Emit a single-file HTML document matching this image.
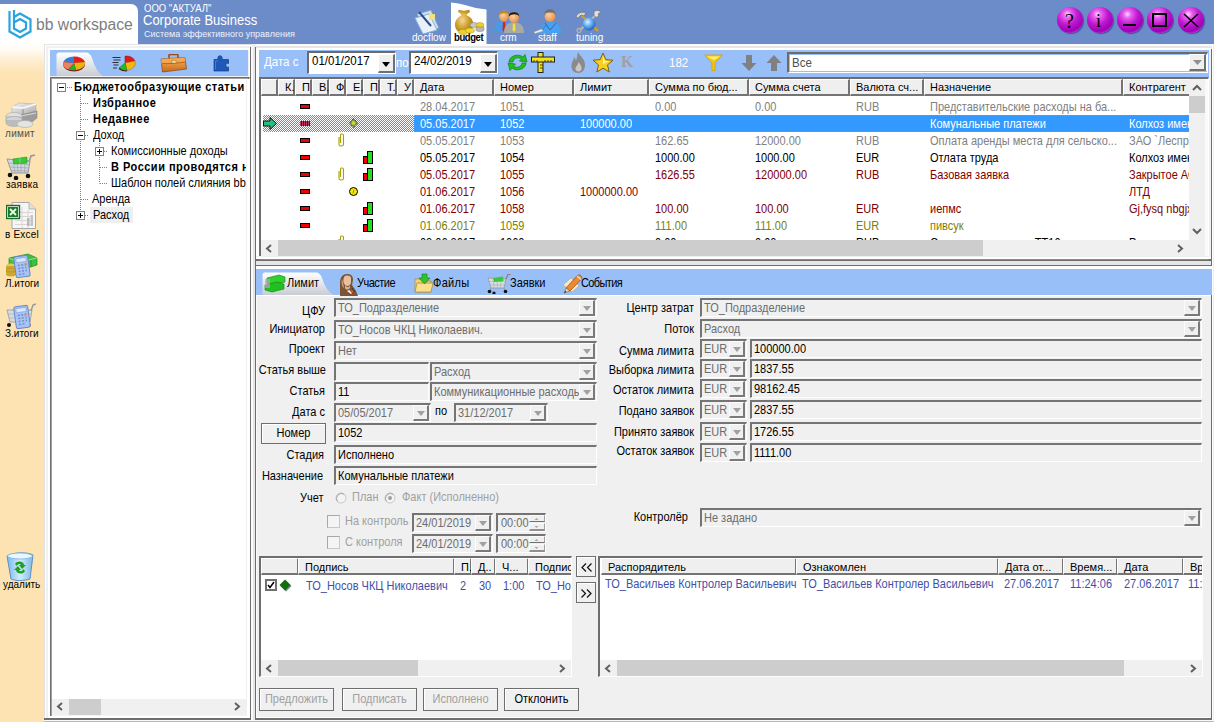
<!DOCTYPE html>
<html><head><meta charset="utf-8">
<style>
*{margin:0;padding:0;box-sizing:border-box}
html,body{width:1214px;height:722px;overflow:hidden;background:#f0f0f0;font-family:"Liberation Sans",sans-serif;font-size:11px;color:#000;position:relative}
.a{position:absolute}
.t{position:absolute;white-space:nowrap;line-height:13px;transform:scaleY(1.1);transform-origin:0 78%}
.r{text-align:right}
.hdr{left:0;top:0;width:1214px;height:44px;background:#6b8cc8}
.wb{top:7px;width:26px;height:26px;border-radius:50%;background:radial-gradient(circle at 40% 28%,#ffd8ff 0,#e860f0 16%,#c018d0 42%,#a000b8 70%,#d040e8 88%,#f080ff 100%);box-shadow:1px 1px 1px rgba(40,40,120,.6)}
.wb span{position:absolute;font-family:"Liberation Serif",serif;color:#000;line-height:20px}
.wb i{position:absolute;background:#000}
.tbox{width:9px;height:9px;border:1px solid #808080;background:#fff}
.tbox .h{position:absolute;left:1px;top:3px;width:5px;height:1px;background:#000}
.tbox .v{position:absolute;left:3px;top:1px;width:1px;height:5px;background:#000}
.tr{line-height:16px}
.fld{position:absolute;background:#f0f0f0;border-style:solid;border-width:2px 1px 1px 2px;border-color:#747474 #fff #fff #747474}
.dd{position:absolute;width:16px;background:#f0f0f0;border-style:solid;border-width:1px 2px 2px 1px;border-color:#fcfcfc #7a7a7a #7a7a7a #fcfcfc}
.dd:after{content:"";position:absolute;left:3px;top:5px;border-style:solid;border-width:5px 4.5px 0 4.5px;border-color:#a0a0a0 transparent transparent transparent}
.gh{position:absolute;top:0;height:17px;background:#efefef;border-style:solid;border-width:1px 2px 2px 1px;border-color:#fff #747474 #747474 #fff}
.ght{position:absolute;top:1px;white-space:nowrap;line-height:13px}
.datebox{position:absolute;top:51px;height:23px;background:#fff;border-style:solid;border-width:2px 1px 1px 2px;border-color:#6e6a68 #fff #fff #6e6a68;font-size:11.5px}
.datebox .t{line-height:16px;top:-1px}
.ddb{position:absolute;top:1px;width:17px;height:19px;background:#efefef;border-style:solid;border-width:1px 2px 2px 1px;border-color:#fff #707070 #707070 #fff}
.ddb:after{content:"";position:absolute;left:3px;top:7px;border-style:solid;border-width:5px 4.5px 0 4.5px;border-color:#000 transparent transparent transparent}
.dith{background:repeating-conic-gradient(#3399ff 0 25%,#fff 0 50%);background-size:2px 2px}
.pbtn{background:#f0f0f0;border:1px solid #6e6e6e;box-shadow:inset 1px 1px 0 #fff}
</style></head><body>
<!-- ===== HEADER ===== -->
<div class="a hdr"></div>
<div class="a" style="left:0;top:4px;width:138px;height:40px;background:#fff;border-top-right-radius:7px"></div>
<!-- sidebar -->
<div class="a" style="left:0;top:44px;width:44px;height:678px;background:linear-gradient(#fffefb 0,#fffaf2 6px,#feeccc 18px,#fde3b2 30px,#fde3b1 100%)"></div>
<!-- logo -->
<svg class="a" style="left:7px;top:8px" width="26" height="32" viewBox="0 0 26 32">
<g fill="none" stroke="#2aa4de" stroke-width="2.2">
<path d="M2.5 3 V23.5 L13 29.5 L23.5 23.5 V11.5 L13 5.5 L7 9"/>
<path d="M7 2 V20.5 L13 24 L19 20.5 V14.5 L13 11 L7 14.5"/>
</g></svg>
<div class="t" style="left:36px;top:16px;font-size:15.7px;line-height:18px;color:#7d7d7d">bb workspace</div>
<div class="t" style="left:144px;top:3px;font-size:9.5px;line-height:11px;color:#fff">ООО "АКТУАЛ"</div>
<div class="t" style="left:143px;top:12px;font-size:13px;line-height:16px;color:#fff;transform:scaleY(1.12);transform-origin:0 0">Corporate Business</div>
<div class="t" style="left:144px;top:29px;font-size:9px;line-height:11px;color:#eef2fb">Система эффективного управления</div>
<!-- modules -->
<svg class="a" style="left:451px;top:2px" width="36" height="42" viewBox="0 0 36 42"><path d="M0 42 V0.5 Q8 1 14 3 Q24 6.5 35.5 7.5 V42 Z" fill="#fff"/></svg>
<svg class="a" style="left:413px;top:8px" width="30" height="26" viewBox="0 0 30 26">
<path d="M4 6 L18 2 L26 20 L12 24 Z" fill="#c9def2" stroke="#7aa0c8" stroke-width="1"/>
<path d="M2 10 L16 6 L24 22 L10 26 Z" fill="#e8f1fa" stroke="#8fb0d6" stroke-width="1"/>
<rect x="16" y="6" width="6" height="6" fill="#f3e27a"/>
<path d="M6 4 L18 18" stroke="#2b4f86" stroke-width="2"/>
</svg>
<div class="t" style="left:412px;top:32px;font-size:10px;line-height:11px;color:#fff">docflow</div>
<svg class="a" style="left:453px;top:8px" width="32" height="27" viewBox="0 0 32 27">
<defs><radialGradient id="bagg" cx="0.4" cy="0.45" r="0.65"><stop offset="0" stop-color="#f8d890"/><stop offset="0.6" stop-color="#c89a28"/><stop offset="1" stop-color="#a07810"/></radialGradient></defs>
<path d="M6 1.5 C8 3 14 3 16 1.5 L17 4 C15 5 14 6 13 7 C19 9 21 14 20 18 C19 23 15 25 11 25 C6 25 2 22 2 17 C2 12 5 9 9 7 C8 6 7 5 5 4 Z" fill="url(#bagg)"/>
<path d="M8 6.5 H14" stroke="#e8c040" stroke-width="1.2"/>
<ellipse cx="10" cy="24" rx="4.5" ry="2.5" fill="#f0d020" stroke="#b09010" stroke-width="0.5"/>
<ellipse cx="17" cy="22.5" rx="4.5" ry="2.5" fill="#f0d830" stroke="#b09010" stroke-width="0.5"/>
<ellipse cx="21" cy="17" rx="4" ry="2.5" fill="#c8c8c8" stroke="#808080" stroke-width="0.5"/>
<ellipse cx="27" cy="17" rx="4" ry="2.5" fill="#f0d020" stroke="#b09010" stroke-width="0.5"/>
<path d="M23 19 H31 V22 C31 24 23 24 23 22 Z" fill="#b8b8b8" stroke="#808080" stroke-width="0.5"/>
</svg>
<div class="t" style="left:454px;top:32px;font-size:10px;line-height:11px;color:#000;letter-spacing:-0.4px;font-weight:bold;font-size:9.5px">budget</div>
<svg class="a" style="left:493px;top:9px" width="32" height="25" viewBox="0 0 32 25">
<defs><radialGradient id="face" cx="0.4" cy="0.4" r="0.7"><stop offset="0" stop-color="#fdd0a0"/><stop offset="1" stop-color="#e08840"/></radialGradient></defs>
<path d="M1 23 C1 15 5 12 11 12 C17 12 20 15 20 23 Z" fill="#4a98e8"/>
<path d="M10 13 L12 13 L12.5 21 L11 23 L9.5 21 Z" fill="#d82020"/>
<ellipse cx="11" cy="7" rx="5" ry="5.5" fill="url(#face)"/>
<path d="M5.8 6 C5.5 1 16 0 16.3 6 C15 3.5 8 3.5 5.8 6 Z" fill="#c08818"/>
<path d="M11 24 C11 16 15 13.5 21 13.5 C27 13.5 31 16 31 24 Z" fill="#a8a8a8"/>
<path d="M20 14.5 L22 14.5 L22.5 21 L21 23 L19.5 21 Z" fill="#f0e040"/>
<ellipse cx="21" cy="8.5" rx="5" ry="5.5" fill="url(#face)"/>
<path d="M15.8 7.5 C15 2 26.5 1.5 26.3 7.5 C25 4.5 18 4.5 15.8 7.5 Z" fill="#181818"/>
</svg>
<div class="t" style="left:500px;top:32px;font-size:10px;line-height:11px;color:#fff">crm</div>
<svg class="a" style="left:533px;top:8px" width="29" height="26" viewBox="0 0 29 26">
<path d="M7 26 C7 17 11 14 18 14 C25 14 28 18 28 26 Z" fill="#48a0f0"/>
<path d="M12 15 L17 22 L23 15" fill="none" stroke="#2a60a8" stroke-width="0.8"/>
<ellipse cx="17" cy="8" rx="5.5" ry="6" fill="url(#face)"/>
<path d="M11.3 8 C10.5 -1 23.5 -1 22.7 8 C22 5 21 4.5 17 4.5 C13 4.5 12 5 11.3 8 Z" fill="#707070"/>
<path d="M1 24 L9 21 L10 23 L2 25.5 Z" fill="#f0f0f0" stroke="#b0b0b0" stroke-width="0.5"/>
<path d="M9 22 L14 16" stroke="#3a70b0" stroke-width="0.8"/>
</svg>
<div class="t" style="left:538px;top:32px;font-size:10px;line-height:11px;color:#fff">staff</div>
<svg class="a" style="left:575px;top:10px" width="27" height="23" viewBox="0 0 27 23">
<defs><radialGradient id="glob" cx="0.4" cy="0.35" r="0.7"><stop offset="0" stop-color="#d8f0ff"/><stop offset="0.5" stop-color="#60a8f0"/><stop offset="1" stop-color="#1858b8"/></radialGradient></defs>
<path d="M6 5 L23 21" stroke="#d8a020" stroke-width="2.2"/>
<path d="M22 4 L5 20" stroke="#b8b8b8" stroke-width="2.2"/>
<circle cx="14" cy="14" r="6.5" fill="url(#glob)"/>
<path d="M1 7 C2 3 7 1 11 3 L9 6 L6 5 L3 8 Z" fill="#d8d8d8" stroke="#707070" stroke-width="0.7"/>
<path d="M19 2 C20 0 24 0 26 2 L23 4 L24 6 C22 8 19 7 19 5 Z" fill="#e0e0e0" stroke="#707070" stroke-width="0.7"/>
<circle cx="4" cy="20.5" r="2" fill="none" stroke="#b0b0b0" stroke-width="1.3"/>
</svg>
<div class="t" style="left:576px;top:32px;font-size:10px;line-height:11px;color:#fff">tuning</div>
<!-- window buttons -->
<div class="a wb" style="left:1057px"><span style="left:8px;top:4px;font-size:20px">?</span></div>
<div class="a wb" style="left:1087px"><span style="left:9px;top:4px;font-size:18px">i</span></div>
<div class="a wb" style="left:1117px"><i style="left:6px;top:17px;width:13px;height:2px"></i></div>
<div class="a wb" style="left:1147px"><i style="left:5px;top:6px;width:15px;height:14px;background:none;border:2px solid #000"></i></div>
<div class="a wb" style="left:1178px"><svg class="a" style="left:5px;top:6px" width="16" height="15"><path d="M1 1 L15 14 M15 1 L1 14" stroke="#000" stroke-width="1.6"/></svg></div>
<!-- ===== RIGHT TOP PANEL ===== -->
<div class="a" style="left:255px;top:44px;width:959px;height:678px;background:#f0f0f0"></div>

<div class="a" style="left:256px;top:44px;width:958px;height:2px;background:#fbfbfb"></div>
<div class="a" style="left:256px;top:46px;width:958px;height:2px;background:#e6e6e6"></div>
<div class="a" style="left:256px;top:48px;width:955px;height:2px;background:#fff"></div>
<div class="a" style="left:256px;top:48px;width:3px;height:212px;background:#fff"></div>
<div class="a" style="left:1211px;top:49px;width:1px;height:673px;background:#6e6e6e"></div>
<div class="a" style="left:1212px;top:44px;width:1px;height:678px;background:#fff"></div>
<div class="a" style="left:259px;top:50px;width:950px;height:27px;background:#98bff8"></div>
<!-- toolbar -->
<div class="t" style="left:264px;top:55px;font-size:11.5px;line-height:14px;color:#fff">Дата с</div>
<div class="a datebox" style="left:307px;top:51px;width:89px"><span class="t" style="left:3px;top:0px">01/01/2017</span><div class="ddb" style="left:69px"></div></div>
<div class="t" style="left:396px;top:56px;font-size:11.5px;line-height:14px;color:#fff">по</div>
<div class="a datebox" style="left:409px;top:51px;width:89px"><span class="t" style="left:3px;top:0px">24/02/2019</span><div class="ddb" style="left:69px"></div></div>
<svg class="a" style="left:506px;top:53px" width="23" height="19" viewBox="0 0 23 19">
<path d="M3 9 C3 3 12 0 17 4 L19 1.5 L21 9 L13.5 8 L15.5 6 C12 3.5 7.5 5 7 9 Z" fill="#20c020" stroke="#108010" stroke-width="0.7"/>
<path d="M20 10 C20 16 11 19 6 15 L4 17.5 L2 10 L9.5 11 L7.5 13 C11 15.5 15.5 14 16 10 Z" fill="#20c020" stroke="#108010" stroke-width="0.7"/>
</svg>
<svg class="a" style="left:531px;top:52px" width="24" height="21" viewBox="0 0 24 21">
<rect x="7" y="0.5" width="5" height="20" fill="#f0e020" stroke="#202020" stroke-width="1"/>
<rect x="0.5" y="5" width="23" height="5" fill="#f0e020" stroke="#202020" stroke-width="1"/>
<path d="M3 8v2M6 8v2M14 8v2M17 8v2M20 8v2M9 13h3M9 16h3" stroke="#202020" stroke-width="0.8"/>
</svg>
<svg class="a" style="left:570px;top:52px" width="17" height="21" viewBox="0 0 17 21">
<path d="M8 0 C10 4 15 7 15 13 C15 18 12 21 8.5 21 C4 21 1 18 1.5 13 C2 9 4 8 4 5 C6 7 6 9 6 9 C7 6 7 3 8 0 Z" fill="#8a8a8a"/>
<path d="M8.5 10 C10 12 12 14 11.5 17 C11 19 9.5 19.5 8.5 19.5 C6.5 19.5 5 18 5.5 16 C6 14 8 13 8.5 10 Z" fill="#c8c8c8"/>
</svg>
<svg class="a" style="left:592px;top:52px" width="22" height="21" viewBox="0 0 22 21">
<path d="M11 1 L13.8 7.6 L21 8.2 L15.5 12.9 L17.2 20 L11 16.2 L4.8 20 L6.5 12.9 L1 8.2 L8.2 7.6 Z" fill="#f8d020" stroke="#806010" stroke-width="1"/>
<path d="M11 4 L12.8 8.8 L17 9.2 L11 12 Z" fill="#fff4a0"/>
</svg>
<div class="t" style="left:621px;top:54px;font-family:'Liberation Serif',serif;font-weight:bold;font-size:16px;line-height:16px;color:#a0a0a0">K</div>
<div class="t" style="left:669px;top:56px;font-size:11.5px;line-height:14px;color:#fff">182</div>
<svg class="a" style="left:704px;top:54px" width="19" height="17" viewBox="0 0 19 17">
<path d="M0.5 1 H18.5 L11 9 V16.5 H8 V9 Z" fill="#f0c818" stroke="#d0a000" stroke-width="0.8"/>
<path d="M3 2.5 H16 L10 6 Z" fill="#fff080"/>
</svg>
<svg class="a" style="left:741px;top:55px" width="16" height="16" viewBox="0 0 16 16"><path d="M5 0 H11 V8 H15.5 L8 16 L0.5 8 H5 Z" fill="#808080"/></svg>
<svg class="a" style="left:766px;top:55px" width="16" height="16" viewBox="0 0 16 16"><path d="M5 16 H11 V8 H15.5 L8 0 L0.5 8 H5 Z" fill="#808080"/></svg>
<div class="a" style="left:787px;top:52px;width:421px;height:21px;background:#fff;border-style:solid;border-width:2px 1px 1px 2px;border-color:#6e6a68 #fff #fff #6e6a68"></div>
<div class="a" style="left:789px;top:54px;width:418px;height:18px;border:1px solid #98bff8;border-right:none"></div>
<div class="t" style="left:792px;top:56px;color:#505050;font-size:11.5px;line-height:14px">Все</div>
<div class="a" style="left:1189px;top:54px;width:17px;height:17px;background:#efefef;border-style:solid;border-width:1px 2px 2px 1px;border-color:#fff #707070 #707070 #fff"></div>
<svg class="a" style="left:1193px;top:60px" width="9" height="5"><path d="M0 0 H9 L4.5 5 Z" fill="#909090"/></svg>
<!-- grid box -->
<div class="a" style="left:259px;top:77px;width:950px;height:181px;background:#fff;border-style:solid;border-width:2px 1px 1px 2px;border-color:#6e6e6e #fff #fff #6e6e6e"></div>
<div class="a" style="left:1205px;top:79px;width:3px;height:178px;background:#fafafa"></div>
<div class="a" style="left:261px;top:79px;width:928px;height:161px;overflow:hidden">
<div class="gh" style="left:0px;width:17px"></div>
<div class="gh" style="left:17px;width:17px"><span class="ght" style="left:6px">К.</span></div>
<div class="gh" style="left:34px;width:17px"><span class="ght" style="left:6px">П</span></div>
<div class="gh" style="left:51px;width:17px"><span class="ght" style="left:6px">В.</span></div>
<div class="gh" style="left:68px;width:17px"><span class="ght" style="left:6px">Ф</span></div>
<div class="gh" style="left:85px;width:17px"><span class="ght" style="left:6px">Е.</span></div>
<div class="gh" style="left:102px;width:17px"><span class="ght" style="left:6px">П</span></div>
<div class="gh" style="left:119px;width:17px"><span class="ght" style="left:6px">Т.</span></div>
<div class="gh" style="left:136px;width:17px"><span class="ght" style="left:6px">У</span></div>
<div class="gh" style="left:153px;width:80px"><span class="ght" style="left:5px">Дата</span></div>
<div class="gh" style="left:233px;width:80px"><span class="ght" style="left:5px">Номер</span></div>
<div class="gh" style="left:313px;width:75px"><span class="ght" style="left:5px">Лимит</span></div>
<div class="gh" style="left:388px;width:100px"><span class="ght" style="left:5px">Сумма по бюд...</span></div>
<div class="gh" style="left:488px;width:101px"><span class="ght" style="left:5px">Сумма счета</span></div>
<div class="gh" style="left:589px;width:74px"><span class="ght" style="left:5px">Валюта сч...</span></div>
<div class="gh" style="left:663px;width:199px"><span class="ght" style="left:5px">Назначение</span></div>
<div class="gh" style="left:862px;width:66px;border-right:none"><span class="ght" style="left:5px">Контрагент</span></div>
<span class="t" style="left:159px;top:20px;line-height:17px;color:#808080">28.04.2017</span>
<span class="t" style="left:239px;top:20px;line-height:17px;color:#808080">1051</span>
<span class="t" style="left:394px;top:20px;line-height:17px;color:#808080">0.00</span>
<span class="t" style="left:494px;top:20px;line-height:17px;color:#808080">0.00</span>
<span class="t" style="left:595px;top:20px;line-height:17px;color:#808080">RUB</span>
<span class="t" style="left:669px;top:20px;line-height:17px;color:#808080">Представительские расходы на ба...</span>
<div class="a" style="left:39px;top:25px;width:10px;height:5px;background:#f00000;border:1px solid #000"></div>
<div class="a dith" style="left:2px;top:36px;width:151px;height:17px"></div>
<div class="a" style="left:153px;top:36px;width:775px;height:17px;background:#3399ff;border:1px dotted #d08040;border-right:none"></div>
<span class="t" style="left:159px;top:37px;line-height:17px;color:#fff">05.05.2017</span>
<span class="t" style="left:239px;top:37px;line-height:17px;color:#fff">1052</span>
<span class="t" style="left:319px;top:37px;line-height:17px;color:#fff">100000.00</span>
<span class="t" style="left:669px;top:37px;line-height:17px;color:#fff">Комунальные платежи</span>
<span class="t" style="left:868px;top:37px;line-height:17px;color:#fff">Колхоз имени Ленина</span>
<svg class="a" style="left:2px;top:38px" width="14" height="13" viewBox="0 0 14 13"><path d="M0.5 4 H7 V0.5 L13.5 6.5 L7 12.5 V9 H0.5 Z" fill="#20c080" stroke="#101010" stroke-width="1"/></svg>
<div class="a" style="left:39px;top:42px;width:10px;height:5px;background:repeating-linear-gradient(90deg,#c03060 0 1px,#202020 1px 2px)"></div>
<svg class="a" style="left:88px;top:39px" width="9" height="10" viewBox="0 0 9 10"><path d="M4.5 0.5 L8.5 5 L4.5 9.5 L0.5 5 Z" fill="#70a040" stroke="#202020" stroke-width="1" stroke-dasharray="1 1"/><circle cx="4.5" cy="5" r="2" fill="#d0d040"/></svg>
<span class="t" style="left:159px;top:54px;line-height:17px;color:#808080">05.05.2017</span>
<span class="t" style="left:239px;top:54px;line-height:17px;color:#808080">1053</span>
<span class="t" style="left:394px;top:54px;line-height:17px;color:#808080">162.65</span>
<span class="t" style="left:494px;top:54px;line-height:17px;color:#808080">12000.00</span>
<span class="t" style="left:595px;top:54px;line-height:17px;color:#808080">RUB</span>
<span class="t" style="left:669px;top:54px;line-height:17px;color:#808080">Оплата аренды места для сельско...</span>
<span class="t" style="left:868px;top:54px;line-height:17px;color:#808080">ЗАО `Леспромхоз</span>
<div class="a" style="left:39px;top:59px;width:10px;height:5px;background:#f00000;border:1px solid #000"></div>
<svg class="a" style="left:76px;top:54px" width="8" height="14" viewBox="0 0 8 14"><path d="M2 4 V11.5 Q2 13 3.5 13 H4.5 Q6.5 13 6.5 11.5 V2.5 Q6.5 1 5 1 H4 Q3.5 1 3.5 2.5 V10" fill="none" stroke="#a8a000" stroke-width="1.1"/></svg>
<span class="t" style="left:159px;top:71px;line-height:17px;color:#000">05.05.2017</span>
<span class="t" style="left:239px;top:71px;line-height:17px;color:#000">1054</span>
<span class="t" style="left:394px;top:71px;line-height:17px;color:#000">1000.00</span>
<span class="t" style="left:494px;top:71px;line-height:17px;color:#000">1000.00</span>
<span class="t" style="left:595px;top:71px;line-height:17px;color:#000">EUR</span>
<span class="t" style="left:669px;top:71px;line-height:17px;color:#000">Отлата труда</span>
<span class="t" style="left:868px;top:71px;line-height:17px;color:#000">Колхоз имени</span>
<div class="a" style="left:39px;top:76px;width:10px;height:5px;background:#f00000;border:1px solid #000"></div>
<svg class="a" style="left:102px;top:72px" width="10" height="13" viewBox="0 0 10 13"><rect x="0.5" y="5.5" width="4" height="7" fill="#f00000" stroke="#000"/><rect x="4.5" y="0.5" width="5" height="12" fill="#20e020" stroke="#000"/></svg>
<span class="t" style="left:159px;top:88px;line-height:17px;color:#800000">05.05.2017</span>
<span class="t" style="left:239px;top:88px;line-height:17px;color:#800000">1055</span>
<span class="t" style="left:394px;top:88px;line-height:17px;color:#800000">1626.55</span>
<span class="t" style="left:494px;top:88px;line-height:17px;color:#800000">120000.00</span>
<span class="t" style="left:595px;top:88px;line-height:17px;color:#800000">RUB</span>
<span class="t" style="left:669px;top:88px;line-height:17px;color:#800000">Базовая заявка</span>
<span class="t" style="left:868px;top:88px;line-height:17px;color:#800000">Закрытое АО</span>
<div class="a" style="left:39px;top:93px;width:10px;height:5px;background:#f00000;border:1px solid #000"></div>
<svg class="a" style="left:76px;top:88px" width="8" height="14" viewBox="0 0 8 14"><path d="M2 4 V11.5 Q2 13 3.5 13 H4.5 Q6.5 13 6.5 11.5 V2.5 Q6.5 1 5 1 H4 Q3.5 1 3.5 2.5 V10" fill="none" stroke="#a8a000" stroke-width="1.1"/></svg>
<svg class="a" style="left:102px;top:89px" width="10" height="13" viewBox="0 0 10 13"><rect x="0.5" y="5.5" width="4" height="7" fill="#f00000" stroke="#000"/><rect x="4.5" y="0.5" width="5" height="12" fill="#20e020" stroke="#000"/></svg>
<span class="t" style="left:159px;top:105px;line-height:17px;color:#800000">01.06.2017</span>
<span class="t" style="left:239px;top:105px;line-height:17px;color:#800000">1056</span>
<span class="t" style="left:319px;top:105px;line-height:17px;color:#800000">1000000.00</span>
<span class="t" style="left:868px;top:105px;line-height:17px;color:#800000">ЛТД</span>
<div class="a" style="left:39px;top:110px;width:10px;height:5px;background:#f00000;border:1px solid #000"></div>
<svg class="a" style="left:88px;top:108px" width="9" height="9" viewBox="0 0 9 9"><circle cx="4.5" cy="4.5" r="4" fill="#f8e800" stroke="#000" stroke-width="1"/><path d="M5 2.5 L4 6.5" stroke="#907000" stroke-width="0.8"/></svg>
<span class="t" style="left:159px;top:122px;line-height:17px;color:#800000">01.06.2017</span>
<span class="t" style="left:239px;top:122px;line-height:17px;color:#800000">1058</span>
<span class="t" style="left:394px;top:122px;line-height:17px;color:#800000">100.00</span>
<span class="t" style="left:494px;top:122px;line-height:17px;color:#800000">100.00</span>
<span class="t" style="left:595px;top:122px;line-height:17px;color:#800000">EUR</span>
<span class="t" style="left:669px;top:122px;line-height:17px;color:#800000">иепмс</span>
<span class="t" style="left:868px;top:122px;line-height:17px;color:#800000">Gj,fysq nbgjxt</span>
<div class="a" style="left:39px;top:127px;width:10px;height:5px;background:#f00000;border:1px solid #000"></div>
<svg class="a" style="left:102px;top:123px" width="10" height="13" viewBox="0 0 10 13"><rect x="0.5" y="5.5" width="4" height="7" fill="#f00000" stroke="#000"/><rect x="4.5" y="0.5" width="5" height="12" fill="#20e020" stroke="#000"/></svg>
<span class="t" style="left:159px;top:139px;line-height:17px;color:#808000">01.06.2017</span>
<span class="t" style="left:239px;top:139px;line-height:17px;color:#808000">1059</span>
<span class="t" style="left:394px;top:139px;line-height:17px;color:#808000">111.00</span>
<span class="t" style="left:494px;top:139px;line-height:17px;color:#808000">111.00</span>
<span class="t" style="left:595px;top:139px;line-height:17px;color:#808000">EUR</span>
<span class="t" style="left:669px;top:139px;line-height:17px;color:#808000">пивсук</span>
<div class="a" style="left:39px;top:144px;width:10px;height:5px;background:#f00000;border:1px solid #000"></div>
<svg class="a" style="left:102px;top:140px" width="10" height="13" viewBox="0 0 10 13"><rect x="0.5" y="5.5" width="4" height="7" fill="#f00000" stroke="#000"/><rect x="4.5" y="0.5" width="5" height="12" fill="#20e020" stroke="#000"/></svg>
<span class="t" style="left:159px;top:156px;line-height:17px;color:#000">02.06.2017</span>
<span class="t" style="left:239px;top:156px;line-height:17px;color:#000">1060</span>
<span class="t" style="left:394px;top:156px;line-height:17px;color:#000">0.00</span>
<span class="t" style="left:494px;top:156px;line-height:17px;color:#000">0.00</span>
<span class="t" style="left:595px;top:156px;line-height:17px;color:#000">RUB</span>
<span class="t" style="left:669px;top:156px;line-height:17px;color:#000">Оплата по договору ТТ10</span>
<span class="t" style="left:868px;top:156px;line-height:17px;color:#000">Ромашка</span>
<svg class="a" style="left:76px;top:156px" width="8" height="14" viewBox="0 0 8 14"><path d="M2 4 V11.5 Q2 13 3.5 13 H4.5 Q6.5 13 6.5 11.5 V2.5 Q6.5 1 5 1 H4 Q3.5 1 3.5 2.5 V10" fill="none" stroke="#a8a000" stroke-width="1.1"/></svg>
</div>
<div class="a" style="left:261px;top:240px;width:928px;height:16px;background:#f0f0f0"></div>
<div class="a" style="left:278px;top:240px;width:705px;height:16px;background:#cdcdcd"></div>
<svg class="a" style="left:265px;top:244px" width="8" height="9"><path d="M6 1 L2 4.5 L6 8" fill="none" stroke="#606060" stroke-width="2"/></svg>
<svg class="a" style="left:1176px;top:244px" width="8" height="9"><path d="M2 1 L6 4.5 L2 8" fill="none" stroke="#606060" stroke-width="2"/></svg>
<div class="a" style="left:1189px;top:79px;width:16px;height:177px;background:#f0f0f0"></div>
<div class="a" style="left:1189px;top:96px;width:16px;height:17px;background:#cdcdcd"></div>
<svg class="a" style="left:1192px;top:84px" width="10" height="7"><path d="M1 6 L5 2 L9 6" fill="none" stroke="#606060" stroke-width="2"/></svg>
<svg class="a" style="left:1192px;top:228px" width="10" height="7"><path d="M1 1 L5 5 L9 1" fill="none" stroke="#606060" stroke-width="2"/></svg><div class="a" style="left:256px;top:256px;width:955px;height:3px;background:#f0f0f0"></div>
<div class="a" style="left:256px;top:257px;width:955px;height:2px;background:#fff"></div>
<div class="a" style="left:255px;top:259px;width:957px;height:2px;background:#6e6e6e"></div>
<div class="a" style="left:259px;top:259px;width:950px;height:1px;background:#8a8a8a"></div>
<div class="a" style="left:256px;top:261px;width:955px;height:4px;background:#e6e6e6"></div>
<div class="a" style="left:255px;top:265px;width:957px;height:1px;background:#6e6e6e"></div>
<div class="a" style="left:256px;top:266px;width:956px;height:3px;background:#fff"></div>
<div class="a" style="left:256px;top:295px;width:1px;height:423px;background:#fafafa"></div>
<div class="a" style="left:256px;top:269px;width:956px;height:26px;background:#98bff8"></div>
<div class="a" style="left:256px;top:295px;width:955px;height:1px;background:#fff"></div>
<svg class="a" style="left:262px;top:272px" width="72" height="23" viewBox="0 0 72 23"><defs><linearGradient id="tg2" x1="0" y1="0" x2="0" y2="1"><stop offset="0" stop-color="#fff"/><stop offset="1" stop-color="#c8ccd4"/></linearGradient></defs><path d="M0.5 23 V3 Q0.5 0.5 3 0.5 H54 Q58 0.5 60 6 Q64 19 71.5 23 Z" fill="url(#tg2)"/></svg>
<svg class="a" style="left:264px;top:274px" width="22" height="19" viewBox="0 0 22 19"><path d="M3 4 L15 1 L21 3 L21 8 L9 11 L3 9 Z" fill="#30d030" stroke="#108010" stroke-width="0.6"/><path d="M1 11 L13 8 L20 10 L20 15 L8 18 L1 16 Z" fill="#20c020" stroke="#108010" stroke-width="0.6"/><rect x="1" y="5" width="5" height="9" fill="#c0a0c0" opacity="0.7"/></svg>
<span class="t" style="left:287px;top:276px;line-height:15px">Лимит</span>
<svg class="a" style="left:338px;top:273px" width="21" height="23" viewBox="0 0 21 23"><path d="M2 23 V10 C2 4 5 1 9 1 C13 1 15 3 15 7 L14 12 L18 18 L20 23 Z" fill="#7a5434"/><path d="M6 4 C8 2 12 2 13 5 L13 10 C12 13 9 14 7 12 C5 10 5 7 6 4 Z" fill="#e8c0a0"/><path d="M4 6 C3 10 4 14 6 15 L5 9 Z" fill="#c8a070"/><path d="M7 12 C9 15 11 15 12 12 L12 15 C10 17 8 17 7 15 Z" fill="#d0b8a0"/><path d="M9 18 L13 21 L15 19 C14 17 12 16 9 18 Z" fill="#f4f4f4"/><path d="M12 17 L16 21" stroke="#c03020" stroke-width="1.5"/><path d="M14 15 L17 19" stroke="#303030" stroke-width="0.8"/></svg>
<span class="t" style="left:357px;top:276px;line-height:15px;letter-spacing:-0.5px">Участие</span>
<svg class="a" style="left:414px;top:273px" width="20" height="20" viewBox="0 0 20 20"><path d="M1 6 H8 L9 8 H17 V19 H1 Z" fill="#f0d070" stroke="#b09030" stroke-width="0.8"/><path d="M3 10 H19 L17 19 H1 Z" fill="#f8e090" stroke="#b09030" stroke-width="0.8"/><path d="M8 1 H13 V5 H16 L10.5 11 L5 5 H8 Z" fill="#30c030" stroke="#108010" stroke-width="0.6"/></svg>
<span class="t" style="left:433px;top:276px;line-height:15px;letter-spacing:0.3px">Файлы</span>
<svg class="a" style="left:487px;top:273px" width="24" height="21" viewBox="0 0 24 21"><path d="M1 5 L19 6 L17 15 L4 15 Z" fill="#d8dce0" stroke="#9098a0" stroke-width="0.8"/><path d="M2 8.5 H18.5 M3 12 H18 M6 5 L7 15 M10 5.5 L10.5 15 M14 5.5 L13.5 15" stroke="#a8b0b8" stroke-width="0.6"/><path d="M6 5 L16 3.5 L16.5 8 L7 9 Z" fill="#38c838"/><path d="M19 6 L21 1.5 L23.5 1.5" fill="none" stroke="#a07070" stroke-width="1.2"/><path d="M4 15 L3 18 M17 15 L18 18" stroke="#8890a0" stroke-width="0.8"/><circle cx="2.5" cy="18.5" r="1.8" fill="#101010"/><circle cx="7" cy="20" r="1.6" fill="#101010"/><circle cx="18.5" cy="18.5" r="1.8" fill="#101010"/></svg>
<span class="t" style="left:510px;top:276px;line-height:15px">Заявки</span>
<svg class="a" style="left:562px;top:273px" width="21" height="21" viewBox="0 0 21 21"><path d="M1 12 L9 5 L17 13 L10 19 Z" fill="#f0ead0" stroke="#b8b090" stroke-width="0.8"/><path d="M4 15 L15 3 C16 1.5 18 1.5 19 3 C20 4 20 5.5 19 6.5 L8 18 Z" fill="#f08830" stroke="#a05010" stroke-width="0.8"/><path d="M15 3 L19 6.5" stroke="#e0e0e0" stroke-width="1.5"/><path d="M4 15 L8 18 L2 20 Z" fill="#f0d8a0" stroke="#806040" stroke-width="0.6"/><path d="M2 20 L3.5 17.5 L4.5 19 Z" fill="#303030"/></svg>
<span class="t" style="left:581px;top:276px;line-height:15px;letter-spacing:-0.6px">События</span>
<span class="t r" style="left:125px;width:200px;top:304px;line-height:15px;color:#000">ЦФУ</span>
<div class="fld" style="left:334px;top:298px;width:263px;height:19px;background:#f0f0f0">
<span class="t" style="left:2px;top:0px;line-height:16px;color:#6d6d6d;width:241px;overflow:hidden">ТО_Подразделение</span>
<div class="dd" style="right:1px;top:0px;height:16px"></div>
</div>
<span class="t r" style="left:125px;width:200px;top:322px;line-height:15px;color:#000">Инициатор</span>
<div class="fld" style="left:334px;top:320px;width:263px;height:19px;background:#f0f0f0">
<span class="t" style="left:2px;top:0px;line-height:16px;color:#6d6d6d;width:241px;overflow:hidden">ТО_Носов ЧКЦ Николаевич.</span>
<div class="dd" style="right:1px;top:0px;height:16px"></div>
</div>
<span class="t r" style="left:125px;width:200px;top:342px;line-height:15px;color:#000">Проект</span>
<div class="fld" style="left:334px;top:341px;width:263px;height:19px;background:#f0f0f0">
<span class="t" style="left:2px;top:0px;line-height:16px;color:#6d6d6d;width:241px;overflow:hidden">Нет</span>
<div class="dd" style="right:1px;top:0px;height:16px"></div>
</div>
<span class="t r" style="left:126px;width:200px;top:363px;line-height:15px;color:#000">Статья выше</span>
<div class="fld" style="left:334px;top:362px;width:95px;height:19px;background:#f0f0f0">
</div>
<div class="fld" style="left:430px;top:362px;width:167px;height:19px;background:#f0f0f0">
<span class="t" style="left:2px;top:0px;line-height:16px;color:#6d6d6d;width:145px;overflow:hidden">Расход</span>
<div class="dd" style="right:1px;top:0px;height:16px"></div>
</div>
<span class="t r" style="left:125px;width:200px;top:384px;line-height:15px;color:#000">Статья</span>
<div class="fld" style="left:334px;top:382px;width:95px;height:19px;background:#f0f0f0">
<span class="t" style="left:2px;top:0px;line-height:16px;color:#000;width:89px;overflow:hidden">11</span>
</div>
<div class="fld" style="left:430px;top:382px;width:167px;height:19px;background:#f0f0f0">
<span class="t" style="left:2px;top:0px;line-height:16px;color:#6d6d6d;width:145px;overflow:hidden">Коммуникационные расходы</span>
<div class="dd" style="right:1px;top:0px;height:16px"></div>
</div>
<span class="t r" style="left:125px;width:200px;top:405px;line-height:15px;color:#000">Дата с</span>
<div class="fld" style="left:334px;top:403px;width:97px;height:19px;background:#f0f0f0">
<span class="t" style="left:2px;top:0px;line-height:16px;color:#6d6d6d;width:75px;overflow:hidden">05/05/2017</span>
<div class="dd" style="right:1px;top:0px;height:16px"></div>
</div>
<span class="t" style="left:435px;top:404px;line-height:15px">по</span>
<div class="fld" style="left:454px;top:403px;width:94px;height:19px;background:#f0f0f0">
<span class="t" style="left:2px;top:0px;line-height:16px;color:#6d6d6d;width:72px;overflow:hidden">31/12/2017</span>
<div class="dd" style="right:1px;top:0px;height:16px"></div>
</div>
<div class="a pbtn" style="left:261px;top:423px;width:65px;height:21px"><span class="t" style="left:0;width:63px;text-align:center;top:3px">Номер</span></div>
<div class="fld" style="left:334px;top:423px;width:263px;height:19px;background:#f0f0f0">
<span class="t" style="left:2px;top:0px;line-height:16px;color:#000;width:257px;overflow:hidden">1052</span>
</div>
<span class="t r" style="left:124px;width:200px;top:448px;line-height:15px;color:#000">Стадия</span>
<div class="fld" style="left:334px;top:445px;width:263px;height:19px;background:#f0f0f0">
<span class="t" style="left:2px;top:0px;line-height:16px;color:#000;width:257px;overflow:hidden">Исполнено</span>
</div>
<span class="t r" style="left:123px;width:200px;top:469px;line-height:15px;color:#000">Назначение</span>
<div class="fld" style="left:334px;top:466px;width:263px;height:19px;background:#f0f0f0">
<span class="t" style="left:2px;top:0px;line-height:16px;color:#000;width:257px;overflow:hidden">Комунальные платежи</span>
</div>
<span class="t" style="left:300px;top:491px;line-height:15px">Учет</span>
<svg class="a" style="left:335px;top:492px" width="12" height="12"><circle cx="6" cy="6" r="5" fill="#f4f4f4" stroke="#c8c8c8"/><path d="M2.5 9.5 A5 5 0 0 1 9.5 2.5" fill="none" stroke="#a8a8a8"/></svg>
<span class="t" style="left:352px;top:490px;line-height:15px;color:#a0a0a0">План</span>
<svg class="a" style="left:384px;top:492px" width="12" height="12"><circle cx="6" cy="6" r="5" fill="#f4f4f4" stroke="#c8c8c8"/><path d="M2.5 9.5 A5 5 0 0 1 9.5 2.5" fill="none" stroke="#a8a8a8"/><circle cx="6" cy="6" r="2" fill="#a0a0a0"/></svg>
<span class="t" style="left:402px;top:490px;line-height:15px;color:#a0a0a0">Факт (Исполненно)</span>
<div class="a" style="left:327px;top:515px;width:13px;height:13px;background:#f4f4f4;border:1px solid #c8c8c8;border-top-color:#a8a8a8;border-left-color:#a8a8a8"></div>
<span class="t" style="left:345px;top:514px;line-height:15px;color:#a0a0a0">На контроль</span>
<div class="a" style="left:327px;top:536px;width:13px;height:13px;background:#f4f4f4;border:1px solid #c8c8c8;border-top-color:#a8a8a8;border-left-color:#a8a8a8"></div>
<span class="t" style="left:345px;top:535px;line-height:15px;color:#a0a0a0">С контроля</span>
<div class="fld" style="left:412px;top:513px;width:81px;height:19px;background:#f0f0f0">
<span class="t" style="left:2px;top:0px;line-height:16px;color:#6d6d6d;width:59px;overflow:hidden">24/01/2019</span>
<div class="dd" style="right:1px;top:0px;height:16px"></div>
</div>
<div class="fld" style="left:496px;top:513px;width:50px;height:19px"><span class="t" style="left:3px;top:0;line-height:16px;color:#6d6d6d">00:00</span></div>
<div class="a" style="left:529px;top:515px;width:16px;height:7px;background:#f0f0f0;border-style:solid;border-width:1px 1px 1px 1px;border-color:#fafafa #a0a0a0 #707070 #fafafa"></div>
<div class="a" style="left:529px;top:523px;width:16px;height:8px;background:#f0f0f0;border-style:solid;border-width:1px 1px 2px 1px;border-color:#fafafa #a0a0a0 #909090 #fafafa"></div>
<svg class="a" style="left:534px;top:517px" width="6" height="12"><path d="M0.5 3 L2.5 1 L4.5 3 Z M0.5 9 L2.5 11 L4.5 9 Z" fill="#a8a8a8"/></svg>
<div class="fld" style="left:412px;top:534px;width:81px;height:19px;background:#f0f0f0">
<span class="t" style="left:2px;top:0px;line-height:16px;color:#6d6d6d;width:59px;overflow:hidden">24/01/2019</span>
<div class="dd" style="right:1px;top:0px;height:16px"></div>
</div>
<div class="fld" style="left:496px;top:534px;width:50px;height:19px"><span class="t" style="left:3px;top:0;line-height:16px;color:#6d6d6d">00:00</span></div>
<div class="a" style="left:529px;top:536px;width:16px;height:7px;background:#f0f0f0;border-style:solid;border-width:1px 1px 1px 1px;border-color:#fafafa #a0a0a0 #707070 #fafafa"></div>
<div class="a" style="left:529px;top:544px;width:16px;height:8px;background:#f0f0f0;border-style:solid;border-width:1px 1px 2px 1px;border-color:#fafafa #a0a0a0 #909090 #fafafa"></div>
<svg class="a" style="left:534px;top:538px" width="6" height="12"><path d="M0.5 3 L2.5 1 L4.5 3 Z M0.5 9 L2.5 11 L4.5 9 Z" fill="#a8a8a8"/></svg>
<span class="t r" style="left:494px;width:200px;top:301px;line-height:15px;color:#000">Центр затрат</span>
<div class="fld" style="left:700px;top:298px;width:502px;height:19px;background:#f0f0f0">
<span class="t" style="left:2px;top:0px;line-height:16px;color:#6d6d6d;width:480px;overflow:hidden">ТО_Подразделение</span>
<div class="dd" style="right:1px;top:0px;height:16px"></div>
</div>
<span class="t r" style="left:494px;width:200px;top:322px;line-height:15px;color:#000">Поток</span>
<div class="fld" style="left:700px;top:319px;width:502px;height:19px;background:#f0f0f0">
<span class="t" style="left:2px;top:0px;line-height:16px;color:#6d6d6d;width:480px;overflow:hidden">Расход</span>
<div class="dd" style="right:1px;top:0px;height:16px"></div>
</div>
<span class="t r" style="left:494px;width:200px;top:344px;line-height:15px;color:#000">Сумма лимита</span>
<div class="fld" style="left:700px;top:339px;width:47px;height:19px;background:#f0f0f0">
<span class="t" style="left:2px;top:0px;line-height:16px;color:#6d6d6d;width:25px;overflow:hidden">EUR</span>
<div class="dd" style="right:1px;top:0px;height:16px"></div>
</div>
<div class="fld" style="left:750px;top:339px;width:452px;height:19px;background:#f0f0f0">
<span class="t" style="left:2px;top:0px;line-height:16px;color:#000;width:446px;overflow:hidden">100000.00</span>
</div>
<span class="t r" style="left:494px;width:200px;top:363px;line-height:15px;color:#000">Выборка лимита</span>
<div class="fld" style="left:700px;top:359px;width:47px;height:19px;background:#f0f0f0">
<span class="t" style="left:2px;top:0px;line-height:16px;color:#6d6d6d;width:25px;overflow:hidden">EUR</span>
<div class="dd" style="right:1px;top:0px;height:16px"></div>
</div>
<div class="fld" style="left:750px;top:359px;width:452px;height:19px;background:#f0f0f0">
<span class="t" style="left:2px;top:0px;line-height:16px;color:#000;width:446px;overflow:hidden">1837.55</span>
</div>
<span class="t r" style="left:494px;width:200px;top:383px;line-height:15px;color:#000">Остаток лимита</span>
<div class="fld" style="left:700px;top:379px;width:47px;height:19px;background:#f0f0f0">
<span class="t" style="left:2px;top:0px;line-height:16px;color:#6d6d6d;width:25px;overflow:hidden">EUR</span>
<div class="dd" style="right:1px;top:0px;height:16px"></div>
</div>
<div class="fld" style="left:750px;top:379px;width:452px;height:19px;background:#f0f0f0">
<span class="t" style="left:2px;top:0px;line-height:16px;color:#000;width:446px;overflow:hidden">98162.45</span>
</div>
<span class="t r" style="left:494px;width:200px;top:404px;line-height:15px;color:#000">Подано заявок</span>
<div class="fld" style="left:700px;top:400px;width:47px;height:19px;background:#f0f0f0">
<span class="t" style="left:2px;top:0px;line-height:16px;color:#6d6d6d;width:25px;overflow:hidden">EUR</span>
<div class="dd" style="right:1px;top:0px;height:16px"></div>
</div>
<div class="fld" style="left:750px;top:400px;width:452px;height:19px;background:#f0f0f0">
<span class="t" style="left:2px;top:0px;line-height:16px;color:#000;width:446px;overflow:hidden">2837.55</span>
</div>
<span class="t r" style="left:494px;width:200px;top:425px;line-height:15px;color:#000">Принято заявок</span>
<div class="fld" style="left:700px;top:422px;width:47px;height:19px;background:#f0f0f0">
<span class="t" style="left:2px;top:0px;line-height:16px;color:#6d6d6d;width:25px;overflow:hidden">EUR</span>
<div class="dd" style="right:1px;top:0px;height:16px"></div>
</div>
<div class="fld" style="left:750px;top:422px;width:452px;height:19px;background:#f0f0f0">
<span class="t" style="left:2px;top:0px;line-height:16px;color:#000;width:446px;overflow:hidden">1726.55</span>
</div>
<span class="t r" style="left:494px;width:200px;top:444px;line-height:15px;color:#000">Остаток заявок</span>
<div class="fld" style="left:700px;top:443px;width:47px;height:19px;background:#f0f0f0">
<span class="t" style="left:2px;top:0px;line-height:16px;color:#6d6d6d;width:25px;overflow:hidden">EUR</span>
<div class="dd" style="right:1px;top:0px;height:16px"></div>
</div>
<div class="fld" style="left:750px;top:443px;width:452px;height:19px;background:#f0f0f0">
<span class="t" style="left:2px;top:0px;line-height:16px;color:#000;width:446px;overflow:hidden">1111.00</span>
</div>
<span class="t r" style="left:488px;width:200px;top:510px;line-height:15px;color:#000">Контролёр</span>
<div class="fld" style="left:700px;top:508px;width:502px;height:19px;background:#f0f0f0">
<span class="t" style="left:2px;top:0px;line-height:16px;color:#6d6d6d;width:480px;overflow:hidden">Не задано</span>
<div class="dd" style="right:1px;top:0px;height:16px"></div>
</div><div class="a" style="left:259px;top:556px;width:313px;height:121px;background:#fff;border-style:solid;border-width:2px 1px 1px 2px;border-color:#6e6e6e #fff #fff #6e6e6e"></div>
<div class="a" style="left:261px;top:558px;width:310px;height:102px;overflow:hidden">
<div class="gh" style="left:0px;width:38px;height:17px"></div>
<div class="gh" style="left:37px;width:157px;height:17px"><span class="ght" style="left:6px;top:2px">Подпись</span></div>
<div class="gh" style="left:193px;width:18px;height:17px"><span class="ght" style="left:6px;top:2px">П.</span></div>
<div class="gh" style="left:210px;width:25px;height:17px"><span class="ght" style="left:6px;top:2px">Д..</span></div>
<div class="gh" style="left:234px;width:34px;height:17px"><span class="ght" style="left:6px;top:2px">Ч...</span></div>
<div class="gh" style="left:267px;width:73px;height:17px"><span class="ght" style="left:6px;top:2px">Подпис</span></div>
<span class="t" style="left:45px;top:20px;line-height:17px;color:#3f4fa8">ТО_Носов ЧКЦ Николаевич</span>
<span class="t" style="left:199px;top:20px;line-height:17px;color:#3f4fa8">2</span>
<span class="t" style="left:218px;top:20px;line-height:17px;color:#3f4fa8">30</span>
<span class="t" style="left:242px;top:20px;line-height:17px;color:#3f4fa8">1:00</span>
<span class="t" style="left:275px;top:20px;line-height:17px;color:#3f4fa8">ТО_Носов</span>
</div>
<div class="a" style="left:261px;top:660px;width:310px;height:16px;background:#f0f0f0"></div>
<div class="a" style="left:278px;top:660px;width:140px;height:16px;background:#cdcdcd"></div>
<svg class="a" style="left:265px;top:664px" width="8" height="9"><path d="M6 1 L2 4.5 L6 8" fill="none" stroke="#606060" stroke-width="2"/></svg>
<svg class="a" style="left:558px;top:664px" width="8" height="9"><path d="M2 1 L6 4.5 L2 8" fill="none" stroke="#606060" stroke-width="2"/></svg>
<div class="a" style="left:265px;top:579px;width:12px;height:12px;background:#fff;border:2px solid #707070"></div>
<svg class="a" style="left:267px;top:581px" width="8" height="8"><path d="M1 4 L3 6.5 L7 1" fill="none" stroke="#000" stroke-width="1.5"/></svg>
<svg class="a" style="left:279px;top:579px" width="13" height="13"><path d="M6 0.5 L11.5 6 L6 11.5 L0.5 6 Z" fill="#808080" transform="translate(1,1)"/><path d="M6 0.5 L11.5 6 L6 11.5 L0.5 6 Z" fill="#107010"/></svg>
<div class="a" style="left:598px;top:556px;width:605px;height:121px;background:#fff;border-style:solid;border-width:2px 1px 1px 2px;border-color:#6e6e6e #fff #fff #6e6e6e"></div>
<div class="a" style="left:600px;top:558px;width:602px;height:102px;overflow:hidden">
<div class="gh" style="left:1px;width:196px;height:17px"><span class="ght" style="left:6px;top:2px">Распорядитель</span></div>
<div class="gh" style="left:196px;width:203px;height:17px"><span class="ght" style="left:6px;top:2px">Ознакомлен</span></div>
<div class="gh" style="left:398px;width:66px;height:17px"><span class="ght" style="left:6px;top:2px">Дата от...</span></div>
<div class="gh" style="left:463px;width:55px;height:17px"><span class="ght" style="left:6px;top:2px">Время...</span></div>
<div class="gh" style="left:517px;width:67px;height:17px"><span class="ght" style="left:6px;top:2px">Дата</span></div>
<div class="gh" style="left:583px;width:58px;height:17px"><span class="ght" style="left:6px;top:2px">Время</span></div>
<span class="t" style="left:5px;top:18px;line-height:17px;color:#3f4fa8">ТО_Васильев Контролер Васильевич</span>
<span class="t" style="left:202px;top:18px;line-height:17px;color:#3f4fa8">ТО_Васильев Контролер Васильевич</span>
<span class="t" style="left:404px;top:18px;line-height:17px;color:#3f4fa8">27.06.2017</span>
<span class="t" style="left:470px;top:18px;line-height:17px;color:#3f4fa8">11:24:06</span>
<span class="t" style="left:524px;top:18px;line-height:17px;color:#3f4fa8">27.06.2017</span>
<span class="t" style="left:588px;top:18px;line-height:17px;color:#3f4fa8">11:24:06</span>
</div>
<div class="a" style="left:600px;top:660px;width:602px;height:16px;background:#f0f0f0"></div>
<div class="a" style="left:617px;top:660px;width:507px;height:16px;background:#cdcdcd"></div>
<svg class="a" style="left:604px;top:664px" width="8" height="9"><path d="M6 1 L2 4.5 L6 8" fill="none" stroke="#606060" stroke-width="2"/></svg>
<svg class="a" style="left:1189px;top:664px" width="8" height="9"><path d="M2 1 L6 4.5 L2 8" fill="none" stroke="#606060" stroke-width="2"/></svg>
<div class="a pbtn" style="left:576px;top:556px;width:20px;height:21px"><svg class="a" style="left:4px;top:6px" width="11" height="9"><path d="M5 0.5 L1 4.5 L5 8.5 M10.5 0.5 L6.5 4.5 L10.5 8.5" fill="none" stroke="#101010" stroke-width="1.2"/></svg></div>
<div class="a pbtn" style="left:576px;top:582px;width:20px;height:21px"><svg class="a" style="left:4px;top:6px" width="11" height="9"><path d="M0.5 0.5 L4.5 4.5 L0.5 8.5 M6 0.5 L10 4.5 L6 8.5" fill="none" stroke="#101010" stroke-width="1.2"/></svg></div>
<div class="a pbtn" style="left:259px;top:688px;width:75px;height:23px"><span class="t" style="left:0;width:73px;text-align:center;top:4px;color:#a0a0a0">Предложить</span></div>
<div class="a pbtn" style="left:342px;top:688px;width:75px;height:23px"><span class="t" style="left:0;width:73px;text-align:center;top:4px;color:#a0a0a0">Подписать</span></div>
<div class="a pbtn" style="left:423px;top:688px;width:75px;height:23px"><span class="t" style="left:0;width:73px;text-align:center;top:4px;color:#a0a0a0">Исполнено</span></div>
<div class="a pbtn" style="left:504px;top:688px;width:75px;height:23px"><span class="t" style="left:0;width:73px;text-align:center;top:4px;color:#000">Отклонить</span></div><!-- ===== SIDEBAR ICONS ===== -->
<svg class="a" style="left:5px;top:101px" width="33" height="28" viewBox="0 0 33 28">
<defs><linearGradient id="sg1" x1="0" y1="0" x2="1" y2="1"><stop offset="0" stop-color="#f4f4f4"/><stop offset="1" stop-color="#a8a8a8"/></linearGradient></defs>
<path d="M7 6 L14 2 L31 3 L31 11 L16 15 L7 12 Z" fill="url(#sg1)" stroke="#b0b0b0" stroke-width="0.6"/>
<path d="M7 6 L18 7 L31 3" fill="none" stroke="#fafafa" stroke-width="1.6"/>
<path d="M18 8 L18 15" stroke="#909090" stroke-width="1"/>
<path d="M15 14 L32 10 L32 17 L22 25 L15 22 Z" fill="#9c9c9c" stroke="#8a8a8a" stroke-width="0.6"/>
<path d="M16 15 L31 12" stroke="#d8d8d8" stroke-width="1.2"/>
<ellipse cx="9" cy="15" rx="8" ry="3.5" fill="#e0e0e0" stroke="#aaa" stroke-width="0.6"/>
<path d="M1 15 V19 A8 3.5 0 0 0 17 19 V15" fill="#c8c8c8" stroke="#aaa" stroke-width="0.6"/>
<ellipse cx="9" cy="19" rx="8" ry="3.5" fill="#d4d4d4" stroke="#aaa" stroke-width="0.6"/>
<path d="M1 19 V22 A8 3.5 0 0 0 17 22 V19" fill="#bcbcbc" stroke="#aaa" stroke-width="0.6"/>
<ellipse cx="20" cy="23" rx="8" ry="3.5" fill="#e4e4e4" stroke="#aaa" stroke-width="0.6"/>
</svg>
<div class="t" style="left:5px;top:128px;font-size:10px;line-height:12px;color:#505050;letter-spacing:0.3px">лимит</div>
<svg class="a" style="left:6px;top:153px" width="30" height="27" viewBox="0 0 30 27">
<path d="M1 6 L24 8 L22 20 L6 20 Z" fill="#d4d8dc" stroke="#9098a0" stroke-width="1"/>
<path d="M3 10 L23 11.5 M4 14 L22.5 15 M5 17.5 L22 18 M7 7 L9 20 M11 7 L12 20 M15 7.5 L15 20 M19 8 L18.5 20" stroke="#a0a8b0" stroke-width="0.8"/>
<path d="M7 6 L21 4 L21 10 L8 11 Z" fill="#38c838" stroke="#18a018" stroke-width="0.6"/>
<path d="M14 5 L14 10.5" stroke="#70e070" stroke-width="1"/>
<path d="M23 9 L25 3 L29 2" fill="none" stroke="#9098a0" stroke-width="1.6"/>
<circle cx="4" cy="22" r="2.3" fill="#101010"/><circle cx="10" cy="25" r="2.3" fill="#101010"/><circle cx="22" cy="23" r="2.3" fill="#101010"/>
</svg>
<div class="t" style="left:6px;top:179px;font-size:10px;line-height:12px;color:#000;letter-spacing:0.2px">заявка</div>
<svg class="a" style="left:6px;top:202px" width="30" height="27" viewBox="0 0 30 27">
<path d="M6 0.5 L23 0.5 L29.5 7 L29.5 26.5 L6 26.5 Z" fill="#f6f6f6" stroke="#a8a8a8" stroke-width="1"/>
<path d="M23 0.5 V7 H29.5" fill="#e0e0e0" stroke="#a8a8a8" stroke-width="0.8"/>
<path d="M9 10.5 H27 M9 14.5 H27 M9 18.5 H27 M9 22.5 H27 M16 5 V26 M22 8 V26" stroke="#cfcfcf" stroke-width="0.8"/>
<rect x="21" y="16" width="2.5" height="8" fill="#b8b8b8"/><rect x="24.5" y="13" width="2.5" height="11" fill="#c4c4c4"/>
<rect x="0.5" y="3.5" width="13" height="13" fill="#e8f4e8" stroke="#1a6a28" stroke-width="1.4"/>
<rect x="2" y="5" width="10" height="10" fill="#1c7a30"/>
<path d="M4 7 L10 13 M10 7 L4 13" stroke="#e8ffe8" stroke-width="1.8"/>
</svg>
<div class="t" style="left:5px;top:229px;font-size:10px;line-height:12px;color:#000;letter-spacing:0.2px">в Excel</div>
<svg class="a" style="left:6px;top:253px" width="32" height="26" viewBox="0 0 32 26">
<path d="M3 5 L22 1 L31 5 L31 12 L12 18 L3 13 Z" fill="#40c040" stroke="#208a20" stroke-width="0.7"/>
<path d="M3 5 L12 9 L31 5" fill="none" stroke="#80e080" stroke-width="1.2"/>
<path d="M12 10 L12 18 M25 7 L25 14" stroke="#289028" stroke-width="0.8"/>
<ellipse cx="5" cy="13" rx="5" ry="2.5" fill="#e8c850"/><path d="M0 13 V21 A5 2.5 0 0 0 10 21 V13" fill="#d0a830"/>
<ellipse cx="5" cy="17" rx="5" ry="2" fill="none" stroke="#b08820" stroke-width="0.6"/>
<g transform="rotate(-8 16 14)">
<rect x="9" y="3" width="14" height="21" rx="2" fill="#a8c4f4" stroke="#6a88c8" stroke-width="1"/>
<rect x="11" y="5" width="10" height="4" fill="#d8e8ff" stroke="#7a98d0" stroke-width="0.5"/>
<path d="M12 12h2M15.5 12h2M19 12h1.5M12 15h2M15.5 15h2M19 15h1.5M12 18h2M15.5 18h2M19 18h1.5M12 21h2M15.5 21h2" stroke="#7090d0" stroke-width="1.6"/>
<rect x="19" y="11" width="2" height="2" fill="#f08040"/>
</g>
</svg>
<div class="t" style="left:5px;top:278px;font-size:10px;line-height:12px;color:#000">Л.итоги</div>
<svg class="a" style="left:6px;top:303px" width="30" height="26" viewBox="0 0 30 26">
<path d="M1 7 L26 7 L24 19 L4 19 Z" fill="#d8dce0" stroke="#9098a0" stroke-width="0.8"/>
<path d="M2 11 H25 M3 15 H24" stroke="#a8b0b8" stroke-width="0.7"/>
<path d="M25 8 L27 2 L30 1" fill="none" stroke="#9098a0" stroke-width="1.4"/>
<circle cx="3" cy="22" r="2" fill="#101010"/><circle cx="23" cy="22" r="1.6" fill="#101010"/>
<g transform="rotate(-8 16 14)">
<rect x="9" y="3" width="14" height="22" rx="2" fill="#a8c4f4" stroke="#6a88c8" stroke-width="1"/>
<rect x="11" y="5" width="10" height="4" fill="#d8e8ff" stroke="#7a98d0" stroke-width="0.5"/>
<path d="M12 12h2M15.5 12h2M19 12h1.5M12 15h2M15.5 15h2M19 15h1.5M12 18h2M15.5 18h2M19 18h1.5M12 21h2M15.5 21h2" stroke="#7090d0" stroke-width="1.6"/>
<rect x="19" y="11" width="2" height="2" fill="#f08040"/>
</g>
</svg>
<div class="t" style="left:5px;top:328px;font-size:10px;line-height:12px;color:#000">З.итоги</div>
<svg class="a" style="left:6px;top:552px" width="28" height="29" viewBox="0 0 28 29">
<defs><linearGradient id="bin" x1="0" y1="0" x2="1" y2="0"><stop offset="0" stop-color="#7ab8e8"/><stop offset="0.5" stop-color="#d0ecff"/><stop offset="1" stop-color="#80b8e0"/></linearGradient></defs>
<path d="M1 4 C8 0 22 0 27 3 L24 27 C18 29 9 29 5 27 Z" fill="url(#bin)" stroke="#5a90c8" stroke-width="1"/>
<ellipse cx="14" cy="4" rx="12.5" ry="3" fill="#e8f6ff" stroke="#7ab0e0" stroke-width="0.8"/>
<path d="M9 12 C11 8 18 9 18 13 L20 13 L16 17 L13 13 L15 13 C14 11 11 12 11 14 Z" fill="#20a020"/>
<path d="M19 19 C17 23 10 22 10 18 L8 18 L12 14 L15 18 L13 18 C14 20 17 19 17 17 Z" fill="#20a020"/>
</svg>
<div class="t" style="left:3px;top:579px;font-size:10px;line-height:12px;color:#000">удалить</div>

<!-- ===== TREE PANEL ===== -->
<div class="a" style="left:44px;top:44px;width:208px;height:678px;background:#f0f0f0;border-left:1px solid #e2e2e2;border-top:1px solid #e2e2e2"></div>
<div class="a" style="left:45px;top:45px;width:207px;height:676px;border-left:1px solid #fff;border-top:1px solid #fff"></div>
<div class="a" style="left:48px;top:48px;width:202px;height:672px;border-left:2px solid #fff;border-top:2px solid #fff;border-right:1px solid #fff"></div>
<div class="a" style="left:50px;top:50px;width:198px;height:26px;background:#98bff8"></div>
<!-- left tabs -->
<svg class="a" style="left:56px;top:52px" width="48" height="24" viewBox="0 0 48 24">
<defs><linearGradient id="tg1" x1="0" y1="0" x2="0" y2="1"><stop offset="0" stop-color="#fff"/><stop offset="1" stop-color="#c8ccd4"/></linearGradient></defs>
<path d="M0.5 24 V3 Q0.5 0.5 3 0.5 H30 Q34 0.5 36 6 Q40 20 47 24 Z" fill="url(#tg1)"/>
</svg>
<svg class="a" style="left:62px;top:55px" width="24" height="17" viewBox="0 0 24 17">
<ellipse cx="12" cy="9.5" rx="11" ry="7" fill="#802020"/>
<path d="M12 8 L1.5 7 A11 7 0 0 1 12 1.5 Z" fill="#2f7fe0"/>
<path d="M12 8 L12 1.5 A11 7 0 0 1 23 7 Z" fill="#e02020"/>
<path d="M12 8 L23 7 A11 7 0 0 1 14 15 Z" fill="#f0b010"/>
<path d="M12 8 L14 15 A11 7 0 0 1 6 14.5 Z" fill="#20b020"/>
<path d="M12 8 L6 14.5 A11 7 0 0 1 1.5 7 Z" fill="#f08060"/>
</svg>
<svg class="a" style="left:111px;top:55px" width="26" height="17" viewBox="0 0 26 17">
<path d="M1.5 2.5h8M2.5 5h7M1.5 7.5h6M2.5 10h5M2 13h4" stroke="#303030" stroke-width="1"/>
<path d="M14 8 L14 1 A10 7.5 0 0 1 24 6 Z" fill="#e01818" stroke="#901010" stroke-width="0.5"/>
<path d="M14 8 L24 6 A10 7.5 0 0 1 16 15.5 Z" fill="#f0b810" stroke="#a07000" stroke-width="0.5"/>
<path d="M14 8 L16 15.5 A10 7.5 0 0 1 8 13 Z" fill="#20c020" stroke="#107010" stroke-width="0.5"/>
<path d="M8 13.5 A10 7.5 0 0 0 16 16" fill="none" stroke="#602010" stroke-width="1.2"/>
</svg>
<svg class="a" style="left:160px;top:54px" width="28" height="19" viewBox="0 0 28 19">
<defs><linearGradient id="bc" x1="0" y1="0" x2="0" y2="1"><stop offset="0" stop-color="#f8b860"/><stop offset="1" stop-color="#c86818"/></linearGradient></defs>
<path d="M9 4.5 V1.5 Q9 0.5 10 0.5 H17 Q18 0.5 18 1.5 V4" fill="none" stroke="#a04810" stroke-width="1.5"/>
<path d="M1 5 L25 3.5 L26.5 15 L2.5 18 Z" fill="url(#bc)" stroke="#904010" stroke-width="0.7"/>
<path d="M1 5 L25 3.5 L25.5 8 L1.5 10 Z" fill="#f4a850" opacity="0.8"/>
<path d="M2 9.5 C8 10 18 9 25.5 8" fill="none" stroke="#904010" stroke-width="0.6"/>
<rect x="12" y="6.5" width="4" height="2.5" fill="#f8e0a0" stroke="#a07030" stroke-width="0.4"/>
</svg>
<svg class="a" style="left:213px;top:54px" width="17" height="18" viewBox="0 0 17 18">
<path d="M1 5.5 H5 C3.5 0.5 10.5 0.5 9 5.5 H15.5 V9.5 C12 8 12 14.5 15.5 13 V17 H1 Z" fill="#1e58b8" stroke="#0c3c88" stroke-width="0.7"/>
<path d="M2.5 7 H5 M2.5 7 V15.5" stroke="#4a88e0" stroke-width="0.8"/>
</svg>
<!-- tree box -->
<div class="a" style="left:50px;top:77px;width:200px;height:643px;background:#fff;border-style:solid;border-width:2px 1px 1px 2px;border-color:#6e6e6e #fff #fff #6e6e6e"></div>
<div class="a" style="left:51px;top:78px;width:197px;height:640px;border-left:1px solid #a0a0a0;border-top:1px solid #a0a0a0"></div>
<!-- tree lines -->
<svg class="a" style="left:52px;top:79px" width="194" height="150">
<g stroke="#808080" stroke-width="1" stroke-dasharray="1 1" fill="none">
<path d="M15 8.5 H20"/>
<path d="M28.5 16 V52"/><path d="M28.5 62 V132"/>
<path d="M29 24.5 H37"/><path d="M29 40.5 H37"/><path d="M33 56.5 H37"/><path d="M29 120.5 H37"/><path d="M33 136.5 H37"/>
<path d="M47.5 62 V69"/><path d="M47.5 78 V104.5"/>
<path d="M52 72.5 H56"/><path d="M48 88.5 H56"/><path d="M48 104.5 H56"/>
</g></svg>
<div class="a tbox" style="left:57px;top:83px"><i class="h"></i></div>
<div class="a tbox" style="left:76px;top:131px"><i class="h"></i></div>
<div class="a tbox" style="left:95px;top:147px"><i class="h"></i><i class="v"></i></div>
<div class="a tbox" style="left:76px;top:211px"><i class="h"></i><i class="v"></i></div>
<div class="a" style="left:90px;top:207px;width:43px;height:16px;background:#efefef"></div>
<div class="t tr" style="left:74px;top:79px;font-weight:bold;letter-spacing:0.5px">Бюджетообразующие статьи</div>
<div class="t tr" style="left:93px;top:95px;font-weight:bold;letter-spacing:0.5px">Избранное</div>
<div class="t tr" style="left:93px;top:111px;font-weight:bold;letter-spacing:0.5px">Недавнее</div>
<div class="t tr" style="left:93px;top:127px">Доход</div>
<div class="t tr" style="left:111px;top:143px">Комиссионные доходы</div>
<div class="t tr" style="left:111px;top:159px;font-weight:bold;letter-spacing:0.5px">В России проводятся н</div>
<div class="t tr" style="left:111px;top:175px">Шаблон полей слияния bb</div>
<div class="t tr" style="left:92px;top:191px">Аренда</div>
<div class="t tr" style="left:93px;top:207px">Расход</div>
<div class="a" style="left:246px;top:79px;width:1px;height:637px;background:#f0f0f0"></div>
<div class="a" style="left:247px;top:79px;width:3px;height:637px;background:#fff"></div>
<!-- tree hscroll -->
<div class="a" style="left:52px;top:699px;width:194px;height:16px;background:#f0f0f0"></div>
<div class="a" style="left:69px;top:699px;width:32px;height:16px;background:#cdcdcd"></div>
<svg class="a" style="left:56px;top:702px" width="8" height="9"><path d="M6 1 L2 4.5 L6 8" fill="none" stroke="#606060" stroke-width="2"/></svg>
<svg class="a" style="left:233px;top:702px" width="8" height="9"><path d="M2 1 L6 4.5 L2 8" fill="none" stroke="#606060" stroke-width="2"/></svg>
<!-- splitter -->
<div class="a" style="left:250px;top:47px;width:1px;height:673px;background:#6e6e6e"></div>
<div class="a" style="left:251px;top:47px;width:2px;height:673px;background:#fafafa"></div>
<div class="a" style="left:253px;top:47px;width:2px;height:673px;background:#e6e6e6"></div>
<div class="a" style="left:255px;top:47px;width:1px;height:673px;background:#6e6e6e"></div>
<!-- bottom frame lines -->
<div class="a" style="left:52px;top:715px;width:194px;height:1px;background:#f4f4f4"></div>
<div class="a" style="left:50px;top:716px;width:200px;height:2px;background:#fff"></div>
<div class="a" style="left:44px;top:718px;width:207px;height:2px;background:#6e6e6e"></div>
<div class="a" style="left:44px;top:720px;width:1170px;height:1px;background:#fafafa"></div>
<div class="a" style="left:44px;top:721px;width:1170px;height:1px;background:#b8b8b8"></div>
<div class="a" style="left:256px;top:717px;width:954px;height:1px;background:#fff"></div>
<div class="a" style="left:255px;top:718px;width:957px;height:2px;background:#6e6e6e"></div>


</body></html>
